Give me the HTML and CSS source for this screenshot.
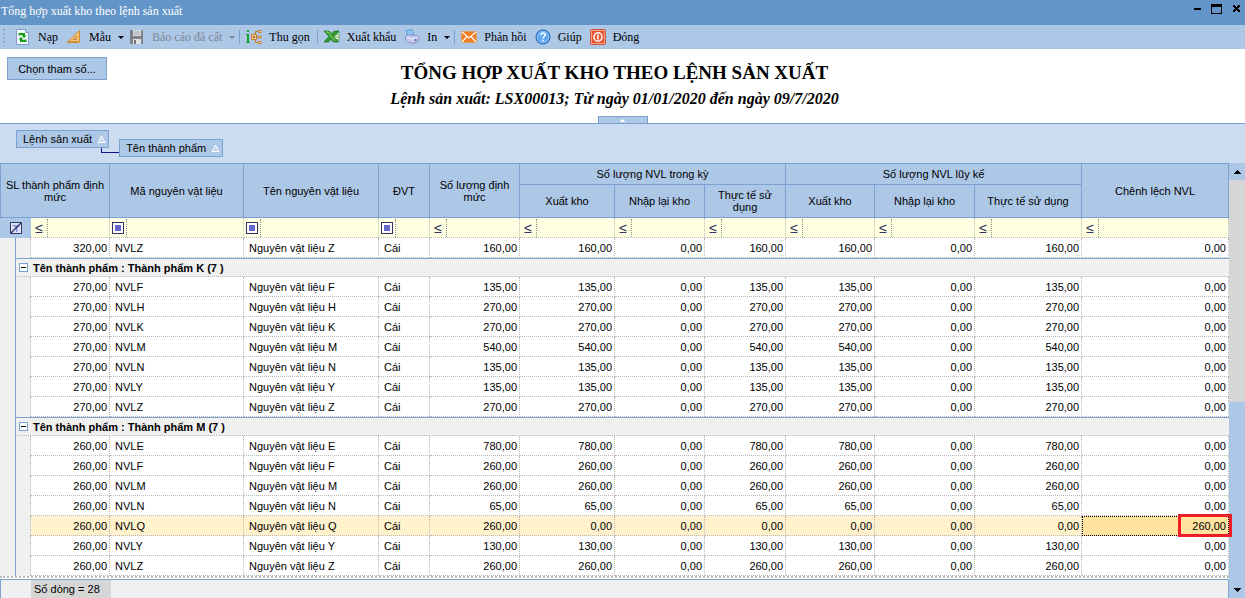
FILE: index.html
```html
<!DOCTYPE html>
<html lang="vi">
<head>
<meta charset="utf-8">
<title>Tổng hợp xuất kho theo lệnh sản xuất</title>
<link rel="stylesheet" href="styles.css">
</head>
<body>
<header class="titlebar">
  <span class="titlebar-text">Tổng hợp xuất kho theo lệnh sản xuất</span>
  <div class="window-buttons">
    <button type="button" aria-label="Thu nhỏ"><svg width="12" height="12" viewBox="0 0 12 12"><path d="M2 5h7v2H2z"/></svg></button>
    <button type="button" aria-label="Phóng to"><svg width="12" height="12" viewBox="0 0 12 12"><path fill-rule="evenodd" d="M0 1h11v10H0zM1 4v6h9V4z"/></svg></button>
    <button type="button" aria-label="Đóng cửa sổ"><svg width="12" height="12" viewBox="0 0 12 12"><path d="M3 2h2v1h1v1h1V3h1V2h2v2H9v1H8v1h1v1h1v2H8V8H7V7H6v1H5v1H3V7h1V6h1V5H4V4H3z"/></svg></button>
  </div>
</header>

<nav class="toolbar">
  <span class="grip"></span>
  <button type="button" class="tool"><svg width="16" height="16" viewBox="0 0 16 16"><path d="M1.500 .5h9l3 3v12h-12z" fill="#f4f9ff" stroke="#7f9cc8"/><path d="M10.500 .5v3h3" fill="#c8daf2" stroke="#7f9cc8"/><path d="M4.500 6.500V5h4.500v2" stroke="#12a012" stroke-width="2" fill="none"/><path d="M6.500 6.500h5L9 9z" fill="#12a012"/><path d="M10.500 10.500V12H6v-2" stroke="#12a012" stroke-width="2" fill="none"/><path d="M3.500 10.500h5L6 8z" fill="#12a012"/></svg>Nạp</button>
  <button type="button" class="tool drop"><svg width="16" height="16" viewBox="0 0 16 16"><path d="M13.500 1.500v12H1z" fill="#f5c572" stroke="#d08a35"/><path d="M10.500 7v3.500H7z" fill="#adc8e8" stroke="#d08a35"/><path d="M3 13v-1M5 13v-1M7 13v-1M9 13v-1M11 13v-1" stroke="#9b6220"/></svg>Mẫu<i class="caret"></i></button>
  <button type="button" class="tool drop" disabled><svg width="16" height="16" viewBox="0 0 16 16"><path d="M1 1h13v14H2l-1-1z" fill="#7e8286"/><path d="M4 1h8v6H4z" fill="#d9dcdf"/><path d="M5 3h6M5 5h6" stroke="#a2a6aa"/><path d="M4 10h8v5H4z" fill="#e2e4e6"/><path d="M5 11h2v4H5z" fill="#6f7377"/></svg>Báo cáo đã cất<i class="caret"></i></button>
  <span class="sep"></span>
  <button type="button" class="tool"><svg width="16" height="16" viewBox="0 0 16 16"><path d="M0 5h3v8h1v1H0v-1h1V6H0zM1 1h2v2H1z" fill="#12a030"/><path d="M9.500 5V2.500H12M9.500 11v2.500H12M10 8h3" stroke="#c57d2c" fill="none"/><path d="M5.500 5.500h5v5h-5z" fill="#ffe7b5" stroke="#c57d2c"/><path d="M6.500 8h3M8 6.500v3" stroke="#9d5411"/><path d="M12.500 1.500h2.500v2h-2.500zM12.500 7h2.500v2h-2.500zM12.500 12.500h2.500v2h-2.500z" fill="#fff0c8" stroke="#c57d2c"/></svg>Thu gọn</button>
  <span class="sep"></span>
  <button type="button" class="tool"><svg width="16" height="16" viewBox="0 0 16 16"><path d="M8 3h7v9H8z" fill="#e9f5e6" stroke="#62a45d"/><path d="M9 5.500h5M9 8h5M9 10.500h5" stroke="#62a45d"/><path d="M0 2h5l2.500 3.200L11 2h4L9.500 8l5 5H9.500l-2.500-3-2.500 3H0l5-5.500z" fill="#2d9a2d" stroke="#15711d" stroke-width=".7"/><path d="M2 3h2l7 9" stroke="#9adb72" fill="none"/></svg>Xuất khẩu</button>
  <button type="button" class="tool drop"><svg width="16" height="16" viewBox="0 0 16 16"><path d="M2 2l6-1.500 2 5-6 2z" fill="#8dc6f3" stroke="#5d9dd6"/><path d="M1.500 8c0-1 1.500-2 3-2l8 .5c2 .5 2.500 1.500 2.500 3v2l-5 3-7-1.500c-1-.5-1.500-1-1.500-2z" fill="#c4c8ee" stroke="#8b91c8"/><path d="M2.500 8.500l6 1.500 5-2" stroke="#eef0ff" fill="none"/><circle cx="11.500" cy="11" r="1.200" fill="#6b72af"/></svg>In<i class="caret"></i></button>
  <span class="sep"></span>
  <button type="button" class="tool"><svg width="16" height="16" viewBox="0 0 16 16"><path d="M.5 2.500h15v11H.5z" fill="#f47b20" stroke="#dca066"/><path d="M1 3l7 6 7-6M1 13l5-5.500M15 13l-5-5.500" stroke="#fff" fill="none" stroke-width="1.200"/></svg>Phản hồi</button>
  <button type="button" class="tool"><svg width="16" height="16" viewBox="0 0 16 16"><circle cx="8" cy="8" r="7" fill="#3f8ee0" stroke="#1e5fb4"/><circle cx="8" cy="8" r="5.800" fill="#5faaf0" stroke="#a9d2fb" stroke-width=".8"/><path d="M6 6.200c0-3 4.200-2.600 4.200-.2C10.200 7.500 8 7.600 8 9.500" stroke="#fff" stroke-width="1.500" fill="none"/><path d="M7.200 10.700h1.600v1.500H7.200z" fill="#fff"/></svg>Giúp</button>
  <button type="button" class="tool"><svg width="16" height="16" viewBox="0 0 16 16"><rect x=".5" y=".5" width="15" height="15" rx="1" fill="#e9532f" stroke="#c9563c"/><rect x="1.500" y="1.500" width="13" height="13" fill="none" stroke="#f3a18a"/><ellipse cx="8" cy="8" rx="4" ry="4.200" fill="none" stroke="#fff" stroke-width="1.500"/><path d="M8 5.500v5" stroke="#fff" stroke-width="1.500"/></svg>Đóng</button>
</nav>

<section class="report-head">
  <button type="button" class="params">Chọn tham số...</button>
  <div class="report-titles">
    <h1>TỔNG HỢP XUẤT KHO THEO LỆNH SẢN XUẤT</h1>
    <p>Lệnh sản xuất: LSX00013; Từ ngày 01/01/2020 đến ngày 09/7/2020</p>
  </div>
  <button type="button" class="collapse" aria-label="Thu gọn tiêu đề"><svg width="5" height="3" viewBox="0 0 5 3"><path d="M2 0h1v1h1v1h1v1H0V2h1V1h1z" fill="#fff"/></svg></button>
</section>

<section class="group-panel">
  <button type="button" class="group-chip">Lệnh sản xuất<svg width="9" height="9" viewBox="0 0 9 9"><path d="M4.500 1L8 7.500H1z" fill="#c5d7ee" stroke="#fff"/></svg></button>
  <span class="group-link"></span>
  <button type="button" class="group-chip nested">Tên thành phẩm<svg width="9" height="9" viewBox="0 0 9 9"><path d="M4.500 1L8 7.500H1z" fill="#c5d7ee" stroke="#fff"/></svg></button>
</section>

<main class="workspace">
  <div class="grid-side">
    <table class="grid">
      <colgroup><col class="w-line"><col class="w-indent"><col class="w-plan"><col class="w-code"><col class="w-name"><col class="w-unit"><col class="w-norm"><col class="w-out"><col class="w-back"><col class="w-used"><col class="w-sum-out"><col class="w-sum-back"><col class="w-sum-used"><col></colgroup>
      <thead>
        <tr class="h-top"><th colspan="3" rowspan="2">SL thành phẩm định mức</th><th rowspan="2">Mã nguyên vật liệu</th><th rowspan="2">Tên nguyên vật liệu</th><th rowspan="2">ĐVT</th><th rowspan="2">Số lượng định mức</th><th colspan="3">Số lượng NVL trong kỳ</th><th colspan="3">Số lượng NVL lũy kế</th><th rowspan="2">Chênh lệch NVL</th></tr>
        <tr class="h-sub"><th>Xuất kho</th><th>Nhập lại kho</th><th>Thực tế sử dụng</th><th>Xuất kho</th><th>Nhập lại kho</th><th>Thực tế sử dụng</th></tr>
      </thead>
      <tbody>
        <tr class="filter">
          <td colspan="2" class="filter-clear"><button type="button" aria-label="Xóa bộ lọc"><svg width="12" height="12" viewBox="0 0 12 12"><path d="M.5.5h11v11H.5z" fill="#dfe3f8" stroke="#333366"/><path d="M2 3h8L7.500 6v4H6V6z" fill="#8d8fd6"/><path d="M11 1L1 11" stroke="#333366" stroke-width="1.300"/></svg></button></td>
          <td><div class="f"><button type="button" class="op">≤</button><input aria-label="Lọc SL thành phẩm định mức"></div></td>
          <td><div class="f"><button type="button" class="op box" aria-label="Kiểu lọc mã"></button><input aria-label="Lọc mã nguyên vật liệu"></div></td>
          <td><div class="f"><button type="button" class="op box" aria-label="Kiểu lọc tên"></button><input aria-label="Lọc tên nguyên vật liệu"></div></td>
          <td><div class="f"><button type="button" class="op box" aria-label="Kiểu lọc ĐVT"></button><input aria-label="Lọc ĐVT"></div></td>
          <td><div class="f"><button type="button" class="op">≤</button><input aria-label="Lọc số lượng định mức"></div></td>
          <td><div class="f"><button type="button" class="op">≤</button><input aria-label="Lọc xuất kho trong kỳ"></div></td>
          <td><div class="f"><button type="button" class="op">≤</button><input aria-label="Lọc nhập lại kho trong kỳ"></div></td>
          <td><div class="f"><button type="button" class="op">≤</button><input aria-label="Lọc thực tế sử dụng trong kỳ"></div></td>
          <td><div class="f"><button type="button" class="op">≤</button><input aria-label="Lọc xuất kho lũy kế"></div></td>
          <td><div class="f"><button type="button" class="op">≤</button><input aria-label="Lọc nhập lại kho lũy kế"></div></td>
          <td><div class="f"><button type="button" class="op">≤</button><input aria-label="Lọc thực tế sử dụng lũy kế"></div></td>
          <td><div class="f"><button type="button" class="op">≤</button><input aria-label="Lọc chênh lệch NVL"></div></td>
        </tr>
        <tr><td class="line"></td><td class="indent"></td><td>320,00</td><td class="t">NVLZ</td><td class="t">Nguyên vật liệu Z</td><td class="t">Cái</td><td>160,00</td><td>160,00</td><td>0,00</td><td>160,00</td><td>160,00</td><td>0,00</td><td>160,00</td><td>0,00</td></tr>
        <tr class="group"><td class="line"></td><td colspan="13"><div class="group-label"><button type="button" class="toggle" aria-label="Thu gọn nhóm"></button>Tên thành phẩm : Thành phẩm K (7 )</div></td></tr>
        <tr><td class="line"></td><td class="indent"></td><td>270,00</td><td class="t">NVLF</td><td class="t">Nguyên vật liệu F</td><td class="t">Cái</td><td>135,00</td><td>135,00</td><td>0,00</td><td>135,00</td><td>135,00</td><td>0,00</td><td>135,00</td><td>0,00</td></tr>
        <tr><td class="line"></td><td class="indent"></td><td>270,00</td><td class="t">NVLH</td><td class="t">Nguyên vật liệu H</td><td class="t">Cái</td><td>270,00</td><td>270,00</td><td>0,00</td><td>270,00</td><td>270,00</td><td>0,00</td><td>270,00</td><td>0,00</td></tr>
        <tr><td class="line"></td><td class="indent"></td><td>270,00</td><td class="t">NVLK</td><td class="t">Nguyên vật liệu K</td><td class="t">Cái</td><td>270,00</td><td>270,00</td><td>0,00</td><td>270,00</td><td>270,00</td><td>0,00</td><td>270,00</td><td>0,00</td></tr>
        <tr><td class="line"></td><td class="indent"></td><td>270,00</td><td class="t">NVLM</td><td class="t">Nguyên vật liệu M</td><td class="t">Cái</td><td>540,00</td><td>540,00</td><td>0,00</td><td>540,00</td><td>540,00</td><td>0,00</td><td>540,00</td><td>0,00</td></tr>
        <tr><td class="line"></td><td class="indent"></td><td>270,00</td><td class="t">NVLN</td><td class="t">Nguyên vật liệu N</td><td class="t">Cái</td><td>135,00</td><td>135,00</td><td>0,00</td><td>135,00</td><td>135,00</td><td>0,00</td><td>135,00</td><td>0,00</td></tr>
        <tr><td class="line"></td><td class="indent"></td><td>270,00</td><td class="t">NVLY</td><td class="t">Nguyên vật liệu Y</td><td class="t">Cái</td><td>135,00</td><td>135,00</td><td>0,00</td><td>135,00</td><td>135,00</td><td>0,00</td><td>135,00</td><td>0,00</td></tr>
        <tr><td class="line"></td><td class="indent"></td><td>270,00</td><td class="t">NVLZ</td><td class="t">Nguyên vật liệu Z</td><td class="t">Cái</td><td>270,00</td><td>270,00</td><td>0,00</td><td>270,00</td><td>270,00</td><td>0,00</td><td>270,00</td><td>0,00</td></tr>
        <tr class="group"><td class="line"></td><td colspan="13"><div class="group-label"><button type="button" class="toggle" aria-label="Thu gọn nhóm"></button>Tên thành phẩm : Thành phẩm M (7 )</div></td></tr>
        <tr><td class="line"></td><td class="indent"></td><td>260,00</td><td class="t">NVLE</td><td class="t">Nguyên vật liệu E</td><td class="t">Cái</td><td>780,00</td><td>780,00</td><td>0,00</td><td>780,00</td><td>780,00</td><td>0,00</td><td>780,00</td><td>0,00</td></tr>
        <tr><td class="line"></td><td class="indent"></td><td>260,00</td><td class="t">NVLF</td><td class="t">Nguyên vật liệu F</td><td class="t">Cái</td><td>260,00</td><td>260,00</td><td>0,00</td><td>260,00</td><td>260,00</td><td>0,00</td><td>260,00</td><td>0,00</td></tr>
        <tr><td class="line"></td><td class="indent"></td><td>260,00</td><td class="t">NVLM</td><td class="t">Nguyên vật liệu M</td><td class="t">Cái</td><td>260,00</td><td>260,00</td><td>0,00</td><td>260,00</td><td>260,00</td><td>0,00</td><td>260,00</td><td>0,00</td></tr>
        <tr><td class="line"></td><td class="indent"></td><td>260,00</td><td class="t">NVLN</td><td class="t">Nguyên vật liệu N</td><td class="t">Cái</td><td>65,00</td><td>65,00</td><td>0,00</td><td>65,00</td><td>65,00</td><td>0,00</td><td>65,00</td><td>0,00</td></tr>
        <tr class="selected"><td class="line"></td><td class="indent"></td><td>260,00</td><td class="t">NVLQ</td><td class="t">Nguyên vật liệu Q</td><td class="t">Cái</td><td>260,00</td><td>0,00</td><td>0,00</td><td>0,00</td><td>0,00</td><td>0,00</td><td>0,00</td><td class="focused">260,00<span class="marker"></span></td></tr>
        <tr><td class="line"></td><td class="indent"></td><td>260,00</td><td class="t">NVLY</td><td class="t">Nguyên vật liệu Y</td><td class="t">Cái</td><td>130,00</td><td>130,00</td><td>0,00</td><td>130,00</td><td>130,00</td><td>0,00</td><td>130,00</td><td>0,00</td></tr>
        <tr><td class="line"></td><td class="indent"></td><td>260,00</td><td class="t">NVLZ</td><td class="t">Nguyên vật liệu Z</td><td class="t">Cái</td><td>260,00</td><td>260,00</td><td>0,00</td><td>260,00</td><td>260,00</td><td>0,00</td><td>260,00</td><td>0,00</td></tr>
      </tbody>
    </table>
    <footer class="summary"><span>Số dòng = 28</span></footer>
  </div>
  <div class="scrollbar">
    <button type="button" aria-label="Cuộn lên"><svg width="7" height="4" viewBox="0 0 7 4"><path d="M3 0h1v1h1v1h1v1h1v1H0V3h1V2h1V1h1z"/></svg></button>
    <div class="track"></div>
    <div class="thumb"></div>
    <button type="button" aria-label="Cuộn xuống"><svg width="7" height="4" viewBox="0 0 7 4"><path d="M0 0h7v1H6v1H5v1H4v1H3V3H2V2H1V1H0z"/></svg></button>
  </div>
</main>
</body>
</html>
```

FILE: styles.css
```css
:root {
  --blue: #adc7e7;
  --blue-dark: #6495c8;
  --blue-pale: #cbdcf1;
  --line: #7ba2d1;
  --gray: #f0f0f0;
  --dots: #b8b8b8;
  --sans: "Liberation Sans", Arial, sans-serif;
  --serif: "Liberation Serif", "Times New Roman", serif;
}

* { box-sizing: border-box; }

body {
  margin: 0;
  min-height: 100vh;
  display: flex;
  flex-direction: column;
  overflow: hidden;
  background: #fff;
  color: #000;
  font: 11px/12px var(--sans);
}

button {
  margin: 0;
  padding: 0;
  border: 0;
  background: none;
  color: inherit;
  font: inherit;
}

svg { display: block; flex: none; }

.titlebar {
  display: flex;
  justify-content: space-between;
  height: 25px;
  padding: 3px 3px 0 1px;
  background: var(--blue-dark);
  color: #fff;
  font: 12px/16px var(--serif);
}

.window-buttons { display: flex; gap: 7px; height: 12px; }

.toolbar {
  display: flex;
  align-items: center;
  height: 24px;
  padding-left: 2px;
  background: var(--blue);
  font: 12px/16px var(--serif);
}

.grip {
  width: 4px;
  height: 18px;
  margin-right: 5px;
  background: radial-gradient(circle, #8fa9c6 1px, transparent 1px) 0 0 / 4px 4px;
}

.tool {
  display: flex;
  align-items: center;
  gap: 7px;
  padding: 0 4px;
  white-space: nowrap;
}

.tool.drop { padding-right: 1px; }
.tool:disabled { color: #7c8794; }

.caret {
  border: 3px solid transparent;
  border-top-color: currentColor;
  border-bottom: 0;
}

.sep {
  width: 1px;
  height: 14px;
  margin: 0 2px 0 3px;
  background: var(--line);
}

.report-head {
  display: grid;
  grid-template-columns: 100px 1fr 100px;
  grid-template-rows: 1fr 7px;
  height: 75px;
  padding: 0 7px;
  border-bottom: 1px solid var(--line);
}

.params {
  align-self: start;
  height: 23px;
  margin-top: 8px;
  border: 1px solid var(--line);
  background: var(--blue);
}

.report-titles {
  padding: 12px 16px 0 0;
  text-align: center;
  font-family: var(--serif);
}

.report-titles h1 { margin: 0; font-size: 19px; line-height: 24px; }
.report-titles p { margin: 4px 0 0; font: italic bold 16px/20px var(--serif); }

.collapse {
  grid-column: 2;
  justify-self: center;
  display: flex;
  align-items: center;
  justify-content: center;
  width: 50px;
  height: 7px;
  border: 1px solid var(--line);
  border-bottom: 0;
  background: var(--blue);
}

.group-panel {
  display: flex;
  align-items: flex-start;
  height: 39px;
  padding: 6px 16px 0;
  background: var(--blue-pale);
}

.group-chip {
  display: flex;
  align-items: center;
  gap: 5px;
  height: 18px;
  padding: 0 2px 0 6px;
  border: 1px solid var(--line);
  background: var(--blue);
  white-space: nowrap;
}

.nested { margin-top: 9px; }

.group-link {
  width: 18px;
  height: 5px;
  margin: 18px 0 0 -8px;
  border: solid #101088;
  border-width: 0 0 1px 1px;
}

.workspace {
  flex: 1;
  display: grid;
  grid-template-columns: 1fr 16px;
}

.grid-side { display: flex; flex-direction: column; min-width: 0; }

.grid {
  width: 100%;
  table-layout: fixed;
  border-collapse: separate;
  border-spacing: 0;
  border-bottom: 2px dotted var(--dots);
}

.w-line { width: 16px; }
.w-indent { width: 15px; }
.w-plan { width: 79px; }
.w-code { width: 134px; }
.w-name { width: 135px; }
.w-unit { width: 51px; }
.w-norm, .w-back { width: 90px; }
.w-out { width: 95px; }
.w-used { width: 81px; }
.w-sum-out { width: 89px; }
.w-sum-back { width: 100px; }
.w-sum-used { width: 107px; }

th {
  padding: 0 4px;
  border: solid var(--line);
  border-width: 0 1px 1px 0;
  background: var(--blue);
  font-weight: normal;
}

.h-top { height: 22px; }
.h-top th { border-top-width: 1px; }
.h-top th:first-child { border-left-width: 1px; }
.h-sub { height: 33px; }

td {
  height: 20px;
  padding: 0 2px 0 5px;
  border: dotted var(--dots);
  border-width: 0 1px 1px 0;
  text-align: right;
  white-space: nowrap;
}

.t { text-align: left; }

.line {
  border: 0;
  border-right: 1px solid var(--line);
  background: var(--gray);
}

.indent { border-bottom: 0; background: var(--gray); }

.filter td { padding: 0; background: #ffffe1; }
.filter .filter-clear { border: 0; background: var(--blue); }
.filter-clear button { display: block; margin: 0 auto; }

.f { display: flex; align-items: center; height: 19px; }

.f input {
  flex: 1;
  min-width: 0;
  height: 18px;
  padding: 0 2px;
  border: 0;
  border-left: 1px dotted #909090;
  background: none;
  font: inherit;
}

.op { width: 16px; color: #333366; font: 14px/16px var(--sans); }

.box {
  width: 12px;
  height: 12px;
  margin: 0 2px;
  border: 1px solid #333366;
  background: linear-gradient(#6666cc, #6666cc) center / 6px 6px no-repeat #fff;
}

.group td { height: 19px; }

.group td + td {
  padding: 0 3px;
  border-top: 1px solid var(--line);
  border-right: 0;
  background: var(--gray);
}

.group-label {
  display: flex;
  align-items: center;
  gap: 5px;
  font-weight: bold;
}

.toggle {
  width: 9px;
  height: 9px;
  border: 1px solid var(--line);
  background: linear-gradient(#000, #000) center / 5px 1px no-repeat #fff;
}

.selected td { background: #fff2cc; }
.selected .line, .selected .indent { background: var(--gray); }

.selected .focused {
  position: relative;
  border: 1px dotted #000;
  background: #ffe39f;
}

.marker {
  position: absolute;
  top: -3px;
  right: -4px;
  width: 54px;
  height: 23px;
  border: 3px solid #ee1c25;
}

.summary {
  flex: 1;
  display: flex;
  margin-top: 1px;
  padding-left: 30px;
  border: 1px solid var(--line);
  border-bottom: 0;
  background: var(--gray);
}

.summary span {
  width: 80px;
  padding: 3px 3px 0;
  background: #d6d6d6;
}

.scrollbar { display: flex; flex-direction: column; background: var(--blue); }

.scrollbar button {
  display: flex;
  align-items: center;
  justify-content: center;
  height: 17px;
}

.track { flex: 222; background: #d6d6d6; }
.thumb { flex: 179; }
```
